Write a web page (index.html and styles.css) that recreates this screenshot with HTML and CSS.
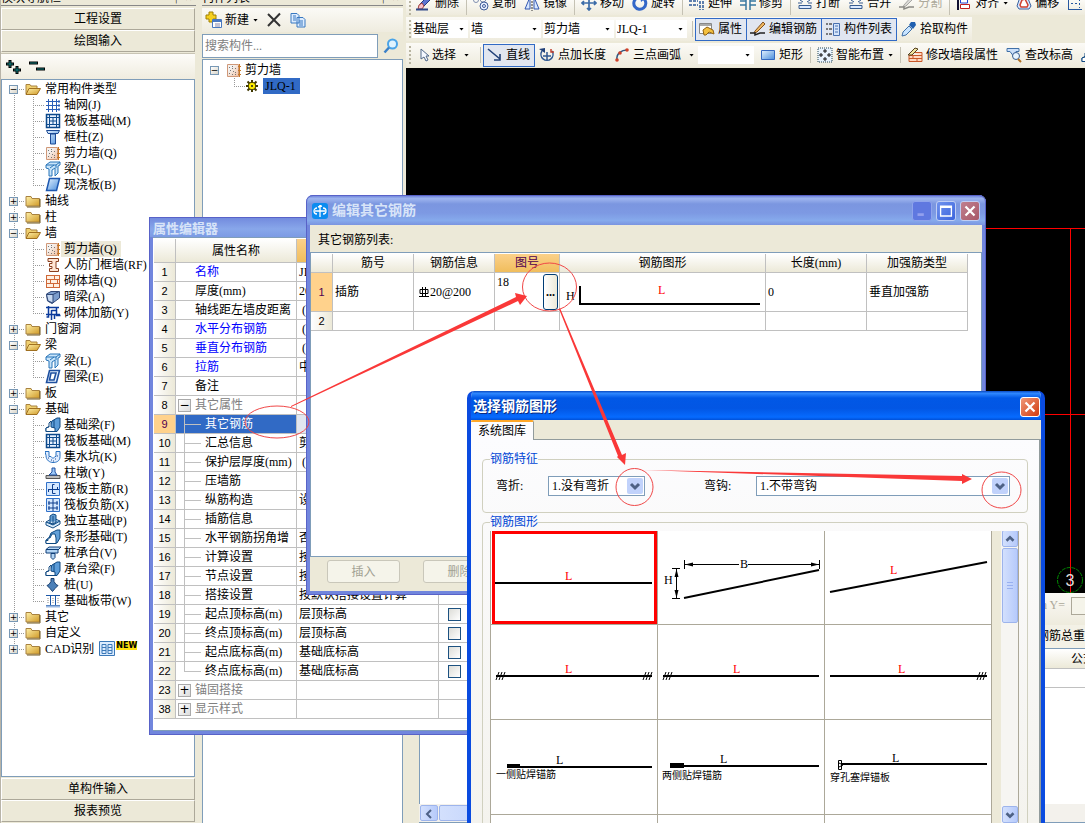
FILE: index.html
```html
<!DOCTYPE html>
<html lang="zh-CN">
<head>
<meta charset="utf-8">
<title>钢筋绘图输入</title>
<link rel="stylesheet" href="styles.css">
</head>
<body>
<svg class="defs" aria-hidden="true">
  <defs>
    <linearGradient id="gold" x1="0" y1="0" x2="1" y2="1"><stop offset="0" stop-color="#fff0a8"/><stop offset="1" stop-color="#d09a28"/></linearGradient>
    <linearGradient id="blue" x1="0" y1="0" x2="1" y2="1"><stop offset="0" stop-color="#e4f2ff"/><stop offset="1" stop-color="#4a8edc"/></linearGradient>
    <linearGradient id="peach" x1="0" y1="0" x2="1" y2="1"><stop offset="0.300" stop-color="#f4f2f0"/><stop offset="1" stop-color="#f4c0a0"/></linearGradient>
  </defs>
  <symbol id="folder" viewBox="0 0 16 16"><path d="M1 13V3.500h5l1 2h7.500V13z" fill="url(#gold)" stroke="#a88240"/><path d="M2 14h13V6" fill="none" stroke="#705820"/></symbol>
  <symbol id="open" viewBox="0 0 16 16"><path d="M1 13V3.500h4l1 1.500h6v3" fill="#f0d070" stroke="#a88240"/><path d="M1 13.500 4 7.500h11.500L12 13.500z" fill="url(#gold)" stroke="#a07020"/></symbol>
  <symbol id="axis" viewBox="0 0 16 16"><path d="M1 4.500h12M1 8.500h12M1 12.500h12M3.500 2v13M7.500 2v13M11.500 2v13" stroke="#2b5fb8" fill="none"/><path d="M13 4.500h2M13 8.500h2M13 12.500h2" stroke="#2b5fb8" stroke-width="2"/></symbol>
  <symbol id="raft" viewBox="0 0 16 16"><path d="M1.500 1.500h13v13h-13z" fill="#e8f2ff" stroke="#0d4a8c" stroke-width="1.500"/><path d="M4.500 4.500h7v7h-7zM8 4.500v7M4.500 8h7M4.500 1.500v3h-3M11.500 1.500v3h3M4.500 14.500v-3h-3M11.500 14.500v-3h3" fill="none" stroke="#0d4a8c"/></symbol>
  <symbol id="column" viewBox="0 0 16 16"><path d="M1.500 1.500h13l-1.500 3h-10zM5.500 5h5v10h-5z" fill="url(#blue)" stroke="#1c4a94"/></symbol>
  <symbol id="wall" viewBox="0 0 16 16"><path d="M1.500 2.500h11v12h-11z" fill="url(#peach)" stroke="#d09878"/><path d="M3 5h1v1H3zM6 4h1v1H6zM4 8h1v1H4zM7 9h1v1H7zM3 11h1v1H3zM6 12h1v1H6zM9 10h1v1H9zM6 6h1v1H6zM9 12h1v1H9zM9 6h1v1H9z" fill="#777"/><path d="M13.500 2v13M12 4.500h3M12 8.500h3M12 12.500h3" stroke="#c87828"/></symbol>
  <symbol id="beam" viewBox="0 0 16 16"><path d="M1 4 5 1h10v3l-2 1v7l-3 3V7L7 9v6H4V8L1 7z" fill="#c8e4fa" stroke="#2874b8"/><path d="M1 4h10l4-3M5 7l4-3M11 4v3" fill="none" stroke="#2874b8"/></symbol>
  <symbol id="slab" viewBox="0 0 16 16"><path d="M4.500 1.500h10l-3 12h-10z" fill="url(#blue)" stroke="#1e58b0" stroke-width="1.500"/></symbol>
  <symbol id="ring" viewBox="0 0 16 16"><path d="M4.500 1.500h10l-3 12h-10zM6 4l-1.500 7H9l2-7z" fill="#e4f0ff" stroke="#1e50a0" stroke-width="1.600"/></symbol>
  <symbol id="doorwall" viewBox="0 0 16 16"><path d="M3 1.500h10.500v3H11v7h2.500v3H4.500v-3H7v-2H4.500v-3H7v-2H3z" fill="#ffe6d4" stroke="#8a4020"/></symbol>
  <symbol id="brick" viewBox="0 0 16 16"><path d="M1 2.500h14v12H1z" fill="#fff0e2"/><path d="M1 2.500h14M1 6.500h14M1 10.500h14M1 14.500h14M1.500 2v12M9.500 2v4M5.500 6v4M12.500 6v4M8.500 10v4M14.500 2v12" stroke="#d06838" fill="none"/></symbol>
  <symbol id="dark" viewBox="0 0 16 16"><path d="M1.500 5 6 2.500h8.500V9L7 14.500 2.500 12z" fill="#7b9ccc" stroke="#304878"/><path d="M1.500 5.500H8V14l-5-2z" fill="#c6d8f0" stroke="#304878"/><path d="m8 5.500 6-3" stroke="#304878"/></symbol>
  <symbol id="tie" viewBox="0 0 16 16"><path d="M1 2.500h13M1 9.500h14M3.500 1v11h-2M6.500 5v10M6.500 5.500h5v5h4M11.500 2v9M9.500 10v4" stroke="#0a3a9c" stroke-width="1.500" fill="none"/></symbol>
  <symbol id="fbeam" viewBox="0 0 16 16"><path d="M1 14.500V11l4-2 2-5 5-3h3v9l-3 4.500z" fill="#5c9cd8" stroke="#104880"/><path d="M1 14.500V11l3-1V6l2-2v6l4 1v3.500zM9 3v8" fill="#fff" stroke="#104880"/></symbol>
  <symbol id="pit" viewBox="0 0 16 16"><path d="M0 2.500h4v5h2l2 2 2-2h1v-5h4v5c0 5-4 6-7 6s-7-2-7-7z" fill="#e0edff" stroke="#2870c0"/><path d="M3 9h1M6 11h1M10 10h1M12 7h1M8 12h1" stroke="#204890"/></symbol>
  <symbol id="pier" viewBox="0 0 16 16"><path d="M1 10.500h14v3H1z" fill="#bcbcbc" stroke="#555"/><path d="m4 10 3-3V3h3v4l2 3z" fill="#9cc8f8" stroke="#2050a0"/></symbol>
  <symbol id="main" viewBox="0 0 16 16"><path d="M1.500 1.500h13v13h-13z" fill="#d5e8ff" stroke="#3070c8"/><path d="M3 8.500h11M9.500 3.500h-2v9h3M12.500 6v3M3.500 8v3" stroke="#0d3c8c" fill="none"/></symbol>
  <symbol id="neg" viewBox="0 0 16 16"><path d="M1.500 1.500h13v13h-13z" fill="#d5e8ff" stroke="#3070c8"/><path d="M8 2v12M3 6h10M3 11h10M4 4v4M12 4v4M4 9v4M12 9v4" stroke="#0d3c8c" fill="none"/></symbol>
  <symbol id="isol" viewBox="0 0 16 16"><path d="m1 9 7-4 7 3v3l-7 4-7-3z" fill="#d9ebfa" stroke="#124c84"/><path d="M5 10V3l3-2 3 1v7l-3 2zM8 3v8M1 9l7 3 7-4" fill="#649dd2" stroke="#124c84"/></symbol>
  <symbol id="strip" viewBox="0 0 16 16"><path d="M8 3 12 1h3v8l-3 5H1v-3l3-2 2-5z" fill="#63a0d8" stroke="#0e4880"/><path d="M1 14.500v-3h2V9h2l2-4h3l1 4v5.500z" fill="#fff" stroke="#0e4880"/></symbol>
  <symbol id="cap" viewBox="0 0 16 16"><path d="M1 4.500 4 2h12l-3 3v3H1zM6 8.500h4v4l-2 2-2-2zM1 4.500h12" fill="#b4d5f4" stroke="#103f78"/></symbol>
  <symbol id="pile" viewBox="0 0 16 16"><path d="M6 1.500h3v3l2 3 2 1-3 3-2.500 3L5 11.500l-3-3 2-1 2-3z" fill="#4b80b8" stroke="#183f70"/></symbol>
  <symbol id="band" viewBox="0 0 16 16"><path d="M1 2.500h14M1 12.500h14M5.500 3v9M10.500 3v9" stroke="#1c58a8" fill="none"/><path d="M1 13.500h14" stroke="#9bb8e0" stroke-width="2"/><path d="M3 5v6M13 5v6M8 5v6" stroke="#888" stroke-dasharray="1 1"/></symbol>
  <symbol id="cadi" viewBox="0 0 16 16"><path d="M.500.500h15v14H.500zM3 3.500h4v9H3zM9 3.500h4v9H9zM3 6.500h4M3 9.500h4M9 6.500h4M9 9.500h4" fill="#dbecff" stroke="#3b78b8"/></symbol>
  <symbol id="newi" viewBox="0 0 18 18"><path d="M4 1h4v3h3v4H8v3H4V8H1V4h3z" fill="#f5d020" stroke="#a08000"/><path d="M7.500 8.500h9v8h-9z" fill="#fff" stroke="#4878c0"/><path d="M8 10h8" stroke="#4878c0" stroke-width="2"/><path d="M10 13h5M10 15h5" stroke="#88a"/></symbol>
  <symbol id="cross" viewBox="0 0 16 16"><path d="m2 2 12 12M14 1.500 2 14" stroke="#333" stroke-width="2" fill="none"/></symbol>
  <symbol id="copyi" viewBox="0 0 16 16"><path d="M1 1.500h6l2 2V11H1zM7 5.500h6l2 2V15H7z" fill="#dcecff" stroke="#3878c0"/><path d="M3 4h3M3 6h3M3 8h3M9 9h4M9 11h4M9 13h4" stroke="#3878c0"/></symbol>
  <symbol id="find" viewBox="0 0 16 16"><circle cx="9.500" cy="6" r="4.500" fill="#e0f4ff" stroke="#4aa4e8" stroke-width="2"/><path d="m6 9.500-4.500 5" stroke="#3a80c8" stroke-width="2.500"/></symbol>
  <symbol id="gear" viewBox="0 0 12 12"><path d="M6 0v12M0 6h12M1.500 1.500l9 9M10.500 1.500l-9 9" stroke="#403800" stroke-width="2"/><circle cx="6" cy="6" r="3.800" fill="#ffee00" stroke="#403800"/><circle cx="6" cy="6" r="1" fill="#222"/></symbol>
  <symbol id="erase" viewBox="0 0 16 16"><path d="m4 9 8-8 3 3-7 7z" fill="#5c74d0" stroke="#203880"/><path d="m3 10 3-2 2 3-2 3H2z" fill="#f8c0c8" stroke="#a04040"/><path d="M0 14.500h12" stroke="#304888" stroke-width="2"/></symbol>
  <symbol id="cpy" viewBox="0 0 16 16"><circle cx="3" cy="5" r="2.500" fill="none" stroke="#8090b0"/><circle cx="10" cy="4" r="3" fill="none" stroke="#8090b0"/><circle cx="11" cy="11" r="4" fill="#e8f0ff" stroke="#405c98"/><circle cx="11" cy="11" r="1.500" fill="none" stroke="#405c98"/></symbol>
  <symbol id="mirror" viewBox="0 0 16 16"><path d="M6 2v12H1zM10 2v12h5z" fill="#d8e8ff" stroke="#3458b0"/><path d="M8 0v16" stroke="#333" stroke-dasharray="2 1"/></symbol>
  <symbol id="move" viewBox="0 0 16 16"><path d="M8 1v14M1 8h14M6 3l2-2 2 2M6 13l2 2 2-2M3 6 1 8l2 2M13 6l2 2-2 2" stroke="#3c6ca8" stroke-width="1.700" fill="none"/></symbol>
  <symbol id="rot" viewBox="0 0 16 16"><path d="M5 3a6 6 0 1 0 7 1" stroke="#3468c8" stroke-width="3" fill="none"/><path d="m8 0 6 3-5 4z" fill="#3468c8"/></symbol>
  <symbol id="extend" viewBox="0 0 16 16"><path d="M0 6h9M0 10h9M11 2v13M14 2v13" stroke="#2c5898" stroke-width="1.500" stroke-dasharray="3 1"/></symbol>
  <symbol id="trim" viewBox="0 0 16 16"><path d="M0 6h6M10 6h6M0 10h6M10 10h6M6 1v14M10 1v14" stroke="#3878a0" stroke-width="1.500"/></symbol>
  <symbol id="brk" viewBox="0 0 16 16"><path d="M2 10.500h12v3H2z" fill="#dceaff" stroke="#385c90"/><path d="M1 8h4M11 8h4M3 5l3 2M13 5l-3 2" stroke="#385c90"/></symbol>
  <symbol id="align" viewBox="0 0 16 16"><path d="M2 0v15" stroke="#113" stroke-width="2"/><path d="M4.500 3h7v5h-7z" fill="#fff" stroke="#2040d0"/><path d="M4.500 9.500h9v4h-9z" fill="#fff" stroke="#c02020"/></symbol>
  <symbol id="offset" viewBox="0 0 16 16"><path d="m4 2 7-1 4 10-2 3H3l-2-3z" fill="#d8e8ff" stroke="#3860a0"/><path d="m6 5 3-1 3 6-1 2H5l-1-2z" fill="#fff" stroke="#d04030" stroke-width="1.500"/></symbol>
  <symbol id="marquee" viewBox="0 0 16 16"><path d="M1.500 1v13M1 14.500h14" stroke="#2858a0" fill="none"/><path d="M4 4.500h9M4 8.500h9M12.500 4v9" stroke="#2858a0" stroke-dasharray="2 2" fill="none"/></symbol>
  <symbol id="attr" viewBox="0 0 16 16"><path d="M.500 2.500h12v10h-12z" fill="#fff" stroke="#888"/><path d="M1 3h11v2H1z" fill="#aaa"/><path d="m4 9 4-3 6 3 1 4-5-2-3 3H5z" fill="#f4c040" stroke="#906010"/></symbol>
  <symbol id="pencil" viewBox="0 0 16 16"><path d="m5 10 8-9 2 2-8 8-3 1z" fill="#f0b860" stroke="#805020"/><path d="M0 12h5v2l5-2h5" stroke="#222" stroke-width="1.500" fill="none"/></symbol>
  <symbol id="listi" viewBox="0 0 16 16"><path d="M1 3h2M1 8h2M1 13h2M4 3h3M4 8h3M4 13h3" stroke="#555" stroke-width="1.500"/><path d="M8.500 2.500h6v12h-6z" fill="#d4e4fa" stroke="#4870b0"/><path d="M10 5h3M10 8h3M10 11h3" stroke="#4870b0"/></symbol>
  <symbol id="drop" viewBox="0 0 16 16"><path d="m1 15 1-4 6-6 3 3-6 6z" fill="#c8e4ff" stroke="#4070a8"/><path d="m8 4 2-3h4l1 3-3 4z" fill="#2060b0"/></symbol>
  <symbol id="arrow" viewBox="0 0 12 16"><path d="M2 2v10l3-2 2 4 2-1-2-4h3z" fill="#f4f8ff" stroke="#506888"/></symbol>
  <symbol id="linei" viewBox="0 0 16 16"><path d="m1 2 12 10M13 7v6H7" stroke="#204078" stroke-width="1.600" fill="none"/></symbol>
  <symbol id="plen" viewBox="0 0 16 16"><path d="M3 4a6 6 0 1 0 10 0M8 5v8M4 9h8" stroke="#305890" stroke-width="1.500" fill="none"/><path d="m0 2 6-1v5z" fill="#204078"/><path d="M12 2v3h3" stroke="#c04030" fill="none" stroke-width="1.500"/></symbol>
  <symbol id="arc" viewBox="0 0 16 16"><path d="M3 13C2 6 8 3 13 3" fill="none" stroke="#305880" stroke-width="1.500"/><circle cx="3" cy="13" r="1.800" fill="#d04028"/><circle cx="6" cy="6" r="1.800" fill="#d04028"/><circle cx="13" cy="3" r="1.800" fill="#d04028"/></symbol>
  <symbol id="rect" viewBox="0 0 16 16"><path d="M1.500 3.500h13v9h-13z" fill="url(#blue)" stroke="#3468c0"/></symbol>
  <symbol id="smart" viewBox="0 0 16 16"><path d="M1 1h14v14H1z" fill="#e9f4ff" stroke="#245" stroke-dasharray="1 1"/><path d="M8 2v4M6 4h4M8 10v4M6 12h4M2 8h4M4 6v4M10 8h4M12 6v4" stroke="#111"/></symbol>
  <symbol id="brickedit" viewBox="0 0 16 16"><path d="M2 8.500h13v6H2zM6 5.500h9v3M2 11.500h13M6 8v3M10 11v3" fill="#ffd8c0" stroke="#c85828"/><path d="m1 8 7-7 3 1-6 6z" fill="#eee4a0" stroke="#554020"/></symbol>
  <symbol id="findh" viewBox="0 0 16 16"><path d="M1 1.500h12v3h-3l-3 4-3-4H1z" fill="#cce0fa" stroke="#4070a8"/><circle cx="10" cy="9" r="3.500" fill="#e8f4ff" stroke="#385c90"/><path d="m12 12 3 3" stroke="#b07020" stroke-width="2"/></symbol>
  <symbol id="down" viewBox="0 0 16 16"><path d="m4 6 4 4 4-4" fill="none" stroke="#4d6185" stroke-width="3"/></symbol>
</svg>

<div class="workspace">
  <nav class="nav">
    <div class="caption"><span>模块导航栏</span><span class="capctl">┿ ×</span></div>
    <button class="navbtn">工程设置</button>
    <button class="navbtn">绘图输入</button>
    <div class="treebar"><svg viewBox="0 0 44 20" width="44" height="20"><path d="M5 3v8M1 7h8M12 9v8M8 13h8M24 6h9M31 12h9" stroke="#000" stroke-width="3"/><path d="M5 4v6M2 7h6M12 10v6M9 13h6M25 6h7M32 12h7" stroke="#108080"/></svg></div>
    <ul class="tree">
      <li><div class="row"><button class="tw">−</button><svg><use href="#open"/></svg>常用构件类型</div>
        <ul>
          <li><svg><use href="#axis"/></svg><span>轴网(J)</span></li>
          <li><svg><use href="#raft"/></svg><span>筏板基础(M)</span></li>
          <li><svg><use href="#column"/></svg><span>框柱(Z)</span></li>
          <li><svg><use href="#wall"/></svg><span>剪力墙(Q)</span></li>
          <li><svg><use href="#beam"/></svg><span>梁(L)</span></li>
          <li><svg><use href="#slab"/></svg><span>现浇板(B)</span></li>
        </ul></li>
      <li><div class="row"><button class="tw">+</button><svg><use href="#folder"/></svg>轴线</div></li>
      <li><div class="row"><button class="tw">+</button><svg><use href="#folder"/></svg>柱</div></li>
      <li><div class="row"><button class="tw">−</button><svg><use href="#open"/></svg>墙</div>
        <ul>
          <li><svg><use href="#wall"/></svg><span class="on">剪力墙(Q)</span></li>
          <li><svg><use href="#doorwall"/></svg><span>人防门框墙(RF)</span></li>
          <li><svg><use href="#brick"/></svg><span>砌体墙(Q)</span></li>
          <li><svg><use href="#dark"/></svg><span>暗梁(A)</span></li>
          <li><svg><use href="#tie"/></svg><span>砌体加筋(Y)</span></li>
        </ul></li>
      <li><div class="row"><button class="tw">+</button><svg><use href="#folder"/></svg>门窗洞</div></li>
      <li><div class="row"><button class="tw">−</button><svg><use href="#open"/></svg>梁</div>
        <ul>
          <li><svg><use href="#beam"/></svg><span>梁(L)</span></li>
          <li><svg><use href="#ring"/></svg><span>圈梁(E)</span></li>
        </ul></li>
      <li><div class="row"><button class="tw">+</button><svg><use href="#folder"/></svg>板</div></li>
      <li><div class="row"><button class="tw">−</button><svg><use href="#open"/></svg>基础</div>
        <ul>
          <li><svg><use href="#fbeam"/></svg><span>基础梁(F)</span></li>
          <li><svg><use href="#raft"/></svg><span>筏板基础(M)</span></li>
          <li><svg><use href="#pit"/></svg><span>集水坑(K)</span></li>
          <li><svg><use href="#pier"/></svg><span>柱墩(Y)</span></li>
          <li><svg><use href="#main"/></svg><span>筏板主筋(R)</span></li>
          <li><svg><use href="#neg"/></svg><span>筏板负筋(X)</span></li>
          <li><svg><use href="#isol"/></svg><span>独立基础(P)</span></li>
          <li><svg><use href="#strip"/></svg><span>条形基础(T)</span></li>
          <li><svg><use href="#cap"/></svg><span>桩承台(V)</span></li>
          <li><svg><use href="#fbeam"/></svg><span>承台梁(F)</span></li>
          <li><svg><use href="#pile"/></svg><span>桩(U)</span></li>
          <li><svg><use href="#band"/></svg><span>基础板带(W)</span></li>
        </ul></li>
      <li><div class="row"><button class="tw">+</button><svg><use href="#folder"/></svg>其它</div></li>
      <li><div class="row"><button class="tw">+</button><svg><use href="#folder"/></svg>自定义</div></li>
      <li><div class="row"><button class="tw">+</button><svg><use href="#folder"/></svg>CAD识别<svg class="cadicon"><use href="#cadi"/></svg><b class="new">NEW</b></div></li>
    </ul>
    <button class="navbtn">单构件输入</button>
    <button class="navbtn">报表预览</button>
  </nav>

  <section class="parts">
    <div class="caption"><span>构件列表</span><span class="capctl">┿ ×</span></div>
    <div class="partsbar">
      <button class="flat"><svg class="i18"><use href="#newi"/></svg>新建<i class="caret"></i></button>
      <button class="flat" aria-label="删除"><svg><use href="#cross"/></svg></button>
      <button class="flat" aria-label="复制"><svg><use href="#copyi"/></svg></button>
    </div>
    <div class="search"><input type="text" placeholder="搜索构件..." aria-label="搜索构件"><button class="flat" aria-label="搜索"><svg><use href="#find"/></svg></button></div>
    <ul class="partlist">
      <li><button class="tw">−</button><svg><use href="#wall"/></svg>剪力墙</li>
      <li class="leaf"><svg><use href="#gear"/></svg><span class="picked">JLQ-1</span></li>
    </ul>
  </section>

  <main class="main">
    <div class="bar bar1"><i class="grip"></i>
      <button class="tool"><svg><use href="#erase"/></svg>删除</button><i class="sep"></i>
      <button class="tool"><svg><use href="#cpy"/></svg>复制</button>
      <button class="tool"><svg><use href="#mirror"/></svg>镜像</button><i class="sep"></i>
      <button class="tool"><svg><use href="#move"/></svg>移动</button>
      <button class="tool"><svg><use href="#rot"/></svg>旋转</button><i class="sep"></i>
      <button class="tool"><svg><use href="#extend"/></svg>延伸</button>
      <button class="tool"><svg><use href="#trim"/></svg>修剪</button><i class="sep"></i>
      <button class="tool"><svg><use href="#brk"/></svg>打断</button>
      <button class="tool"><svg><use href="#brk"/></svg>合并</button>
      <button class="tool" disabled><svg><use href="#pencil"/></svg>分割</button><i class="sep"></i>
      <button class="tool"><svg><use href="#align"/></svg>对齐<i class="caret"></i></button>
      <button class="tool"><svg><use href="#offset"/></svg>偏移</button>
      <button class="tool" aria-label="选框"><svg><use href="#marquee"/></svg></button>
    </div>
    <div class="bar bar2"><i class="grip"></i>
      <span class="combo short"><select aria-label="楼层"><option>基础层</option></select><i class="caret"></i></span>
      <span class="combo"><select aria-label="类别"><option>墙</option></select><i class="caret"></i></span>
      <span class="combo"><select aria-label="构件类型"><option>剪力墙</option></select><i class="caret"></i></span>
      <span class="combo"><select aria-label="构件"><option>JLQ-1</option></select><i class="caret"></i></span><i class="sep"></i>
      <div class="group"><button class="tool down"><svg><use href="#attr"/></svg>属性</button><button class="tool down"><svg><use href="#pencil"/></svg>编辑钢筋</button><button class="tool down"><svg><use href="#listi"/></svg>构件列表</button></div>
      <button class="tool"><svg><use href="#drop"/></svg>拾取构件</button>
    </div>
    <div class="bar bar3"><i class="grip"></i>
      <button class="tool pick"><svg class="i12"><use href="#arrow"/></svg>选择<i class="caret wide"></i></button><i class="sep"></i>
      <button class="tool down"><svg><use href="#linei"/></svg>直线</button>
      <button class="tool"><svg><use href="#plen"/></svg>点加长度</button>
      <button class="tool"><svg><use href="#arc"/></svg>三点画弧<i class="caret wide"></i></button>
      <span class="combo short"><select aria-label="弧参数"><option></option></select><i class="caret"></i></span>
      <button class="tool"><svg><use href="#rect"/></svg>矩形</button><i class="sep"></i>
      <button class="tool"><svg><use href="#smart"/></svg>智能布置<i class="caret"></i></button><i class="sep"></i>
      <button class="tool"><svg><use href="#brickedit"/></svg>修改墙段属性</button>
      <button class="tool"><svg><use href="#findh"/></svg>查改标高</button>
      <button class="tool" aria-label="墙"><svg><use href="#fbeam"/></svg></button>
    </div>
    <div class="canvas">
      <svg viewBox="0 0 120 525" width="120" height="525"><path d="M0 160.500h120M0 346.500h120M105.500 160v365" stroke="#f00" fill="none"/><circle cx="105" cy="512" r="12.500" fill="none" stroke="#008a00" stroke-dasharray="4 1"/><text x="105" y="518" text-anchor="middle" class="axisno">3</text></svg>
    </div>
    <div class="bottom">
      <div class="status"><label>mm Y= <input type="text" aria-label="Y"></label></div>
      <div class="weight">钢筋总重</div>
      <div class="whead">公式</div>
      <div class="wrow"></div>
      <div class="wbody"></div>
      <div class="hscroll"><button aria-label="向左"><svg viewBox="0 0 16 16"><path d="M10 4 6 8l4 4" fill="none" stroke="#4d6185" stroke-width="2"/></svg></button><i></i></div>
    </div>
  </main>
</div>

<section class="win props" aria-label="属性编辑器">
  <h2>属性编辑器</h2>
  <div class="pane">
  <table class="grid">
    <colgroup><col class="c22"><col class="c121"><col class="c142"><col></colgroup>
    <tr class="head"><th></th><th>属性名称</th><th class="hot"></th><th></th></tr>
    <tr><th>1</th><td class="name key">名称</td><td>JLQ</td><td></td></tr>
    <tr><th>2</th><td class="name">厚度(mm)</td><td>200</td><td></td></tr>
    <tr><th>3</th><td class="name">轴线距左墙皮距离</td><td class="in">(</td><td></td></tr>
    <tr><th>4</th><td class="name key">水平分布钢筋</td><td class="in">(2</td><td></td></tr>
    <tr><th>5</th><td class="name key">垂直分布钢筋</td><td class="in">(2</td><td></td></tr>
    <tr><th>6</th><td class="name key">拉筋</td><td>中</td><td></td></tr>
    <tr><th>7</th><td class="name">备注</td><td></td><td></td></tr>
    <tr><th>8</th><td class="parent"><div><button class="box">−</button>其它属性</div></td><td></td><td></td></tr>
    <tr class="cur"><th>9</th><td class="sub">其它钢筋</td><td></td><td></td></tr>
    <tr><th>10</th><td class="sub">汇总信息</td><td>剪</td><td></td></tr>
    <tr><th>11</th><td class="sub">保护层厚度(mm)</td><td class="in">(</td><td></td></tr>
    <tr><th>12</th><td class="sub">压墙筋</td><td></td><td></td></tr>
    <tr><th>13</th><td class="sub">纵筋构造</td><td>设</td><td></td></tr>
    <tr><th>14</th><td class="sub">插筋信息</td><td></td><td></td></tr>
    <tr><th>15</th><td class="sub">水平钢筋拐角增</td><td>否</td><td></td></tr>
    <tr><th>16</th><td class="sub">计算设置</td><td>按</td><td></td></tr>
    <tr><th>17</th><td class="sub">节点设置</td><td>按</td><td></td></tr>
    <tr><th>18</th><td class="sub">搭接设置</td><td>按默认搭接设置计算</td><td></td></tr>
    <tr><th>19</th><td class="sub">起点顶标高(m)</td><td>层顶标高</td><td class="ck"><input type="checkbox" aria-label="起点顶标高"></td></tr>
    <tr><th>20</th><td class="sub">终点顶标高(m)</td><td>层顶标高</td><td class="ck"><input type="checkbox" aria-label="终点顶标高"></td></tr>
    <tr><th>21</th><td class="sub">起点底标高(m)</td><td>基础底标高</td><td class="ck"><input type="checkbox" aria-label="起点底标高"></td></tr>
    <tr><th>22</th><td class="sub end">终点底标高(m)</td><td>基础底标高</td><td class="ck"><input type="checkbox" aria-label="终点底标高"></td></tr>
    <tr><th>23</th><td class="parent"><div><button class="box">+</button>锚固搭接</div></td><td></td><td></td></tr>
    <tr><th>38</th><td class="parent"><div><button class="box">+</button>显示样式</div></td><td></td><td></td></tr>
  </table>
  </div>
</section>

<section class="win rebar" aria-label="编辑其它钢筋">
  <header>
    <svg width="16" height="16" viewBox="0 0 16 16"><rect width="16" height="16" rx="3" fill="#0c8cf0"/><path d="M8 2v12M3 8h10M6 4l4-1M5 5a3 3 0 0 0 0 6M11 5a3 3 0 0 1 0 6" stroke="#fff" stroke-width="1.300" fill="none"/></svg>
    <h2>编辑其它钢筋</h2>
    <button class="wb" disabled aria-label="最小化"><svg viewBox="0 0 20 20"><path d="M5 14h7" stroke="#93a0ee" stroke-width="3"/></svg></button>
    <button class="wb" aria-label="最大化"><svg viewBox="0 0 20 20"><path d="M4 4.500h12v11H4zM4 6h12" fill="none" stroke="#fff" stroke-width="1.500"/></svg></button>
    <button class="wb close" aria-label="关闭"><svg viewBox="0 0 20 20"><path d="m5 5 10 10M15 5 5 15" stroke="#fff" stroke-width="2.500"/></svg></button>
  </header>
  <p>其它钢筋列表:</p>
  <div class="pane">
    <table class="grid">
      <colgroup><col class="c22"><col class="c81"><col class="c81"><col class="c65"><col class="c206"><col class="c101"><col class="c101"></colgroup>
      <tr class="head"><th></th><th>筋号</th><th>钢筋信息</th><th class="hot">图号</th><th>钢筋图形</th><th>长度(mm)</th><th>加强筋类型</th></tr>
      <tr class="tall"><th class="curno">1</th><td>插筋</td><td><svg class="phi" viewBox="0 0 10 12"><path d="M3.500 1v10M6.500 1v10M1 3.500h8v4H1zM0 10.500h10" fill="none" stroke="#000"/></svg>20@200</td>
        <td><div class="picno">18<button class="dots">...</button></div></td>
        <td><svg class="shape" viewBox="0 0 205 38" width="205" height="38"><path d="M20 13v18h180" fill="none" stroke="#000" stroke-width="2"/><text x="6" y="27">H</text><text x="98" y="21" class="red">L</text></svg></td><td>0</td><td>垂直加强筋</td></tr>
      <tr><th>2</th><td></td><td></td><td></td><td></td><td></td><td></td></tr>
    </table>
  </div>
  <footer><button disabled>插入</button><button disabled>删除</button></footer>
</section>

<section class="dialog" aria-label="选择钢筋图形">
  <header><h2>选择钢筋图形</h2><button class="wb close" aria-label="关闭"><svg viewBox="0 0 20 20"><path d="m5 5 10 10M15 5 5 15" stroke="#fff" stroke-width="2.500"/></svg></button></header>
  <div class="tabs"><button class="tab">系统图库</button></div>
  <div class="page">
    <fieldset class="feat"><legend>钢筋特征</legend>
      <div class="fields">
      <label for="bend">弯折:</label><span class="xpsel bend"><select id="bend"><option>1.没有弯折</option></select><svg><use href="#down"/></svg></span>
      <label for="hook">弯钩:</label><span class="xpsel hook"><select id="hook"><option>1.不带弯钩</option></select><svg><use href="#down"/></svg></span>
      </div>
    </fieldset>
    <fieldset class="shapes"><legend>钢筋图形</legend>
      <div class="gallery">
        <div class="cells">
          <button class="sel"><svg viewBox="0 0 166 94"><path d="M4 53h157" class="bar-l"/><text x="74" y="50" class="red">L</text></svg></button>
          <button><svg viewBox="0 0 166 94"><path d="m26 68 135-28" class="bar-l"/><path d="M26.500 30v9M161.500 30v9M27 34.500h54M90 34.500h71M14 38.500h8M14 68.500h8M18.500 39v29" stroke="#000" fill="none"/><path d="m27 34.500 8-2v4zM161 34.500l-8-2v4zM18.500 39l-2 8h4zM18.500 68l-2-8h4z"/><text x="82" y="38">B</text><text x="6" y="54">H</text></svg></button>
          <button><svg viewBox="0 0 166 94"><path d="m5 62 157-30" class="bar-l"/><text x="65" y="44" class="red">L</text></svg></button>
          <button><svg viewBox="0 0 166 94"><path d="M5 51h156" class="bar-l"/><path d="m5 55 3-8m0 8 3-8m0 8 3-8M152 55l3-8m0 8 3-8m0 8 3-8" stroke="#000"/><text x="74" y="48" class="red">L</text></svg></button>
          <button><svg viewBox="0 0 166 94"><path d="M5 51h156" class="bar-l"/><path d="m5 55 3-8m0 8 3-8m0 8 3-8" stroke="#000"/><text x="75" y="48" class="red">L</text></svg></button>
          <button><svg viewBox="0 0 166 94"><path d="M5 51h157" class="bar-l"/><path d="m152 55 3-8m0 8 3-8m0 8 3-8" stroke="#000"/><text x="73" y="48" class="red">L</text></svg></button>
          <button><svg viewBox="0 0 166 94"><path d="M16 47h145" class="bar-l"/><path d="M16 44h13v3H16z"/><text x="65" y="44">L</text><text x="5" y="58" class="note">一侧贴焊锚筋</text></svg></button>
          <button><svg viewBox="0 0 166 94"><path d="M12 46h149" class="bar-l"/><path d="M12 43h14v5H12z"/><text x="62" y="43">L</text><text x="4" y="59" class="note">两侧贴焊锚筋</text></svg></button>
          <button><svg viewBox="0 0 166 94"><path d="M16 44h146" class="bar-l"/><path d="M13.500 40.500h3v9h-3zM14 43l4 2-4 2" stroke="#000" fill="none"/><text x="67" y="42">L</text><text x="5" y="61" class="note">穿孔塞焊锚板</text></svg></button>
          <button></button><button></button><button></button>
        </div>
        <div class="vscroll"><button class="up" aria-label="向上"><svg viewBox="0 0 16 16"><path d="m4 10 4-4 4 4" fill="none" stroke="#4d6185" stroke-width="3"/></svg></button><i></i><button aria-label="向下"><svg viewBox="0 0 16 16"><path d="m4 6 4 4 4-4" fill="none" stroke="#4d6185" stroke-width="3"/></svg></button></div>
      </div>
    </fieldset>
  </div>
</section>

<svg class="marks" viewBox="0 0 1085 823" width="1085" height="823" aria-hidden="true">
  <g fill="none" stroke="#f04848"><ellipse cx="277" cy="422" rx="32" ry="16"/><ellipse cx="549.500" cy="287" rx="27" ry="24"/><circle cx="634.500" cy="487" r="18.500"/><ellipse cx="1001.500" cy="490" rx="19.500" ry="18"/></g>
  <g fill="#fa3838"><path d="m291 406 225-109-1-4 12 3-7 9-2-4-227 106z"/><path d="m559 309 1-1 62 147 4-2-1 12-8-8 1-1z"/><path d="m643 470 319 6v-2l10 5-10 5v-3z"/></g>
</svg>
</body>
</html>
```
FILE: styles.css
```css
* { box-sizing: border-box; }
html, body { height: 100%; }
body { margin: 0; overflow: hidden; position: relative; background: #ece9d8; color: #000; font: 12px/16px "Liberation Serif", "Noto Sans CJK SC", sans-serif; }
button, input, select { font: inherit; color: inherit; margin: 0; padding: 0; border-radius: 0; }
button { background: none; border: 0; white-space: nowrap; }
ul { list-style: none; margin: 0; padding: 0; }
h2, p { margin: 0; }
svg { width: 16px; height: 16px; flex: none; display: block; }
.defs { position: absolute; width: 0; height: 0; }
i { flex: none; }

.workspace { display: grid; grid-template-columns: 196px 206px 1fr; column-gap: 1px; height: 100%; }
.nav, .parts, .main { min-width: 0; min-height: 0; display: flex; flex-direction: column; }
.nav { border-left: 1px solid #b8b4a8; padding-bottom: 1px; }
.caption { height: 6px; line-height: 14px; display: flex; align-items: flex-end; justify-content: space-between; overflow: hidden; border-bottom: 1px solid #888; margin-bottom: 2px; flex: none; }
.capctl { padding-right: 4px; }
.navbtn { height: 22px; flex: none; background: #ece9d8; border: 1px solid #aca899; border-top-color: #fff; border-left-color: #fff; margin-right: 1px; }
.treebar { height: 26px; flex: none; background: linear-gradient(#fdfcf9, #efecdf); padding: 3px 4px; border-top: 1px solid #c8c4b4; margin: 1px 1px 0 0; }
.treebar svg { width: 44px; height: 20px; }
.tree { flex: 1; min-height: 0; overflow: hidden; background: #fff; border: 1px solid #7f9db9; margin-right: 1px; padding-top: 1px; margin-bottom: 1px; }
.tree .row { height: 16px; display: flex; align-items: center; padding-left: 7px; background: repeating-linear-gradient(90deg, #999 0 1px, transparent 1px 2px) 17px 8px / 6px 1px no-repeat; white-space: nowrap; }
.tree .row svg { margin: 0 4px 0 7px; }
.tree > li { background: repeating-linear-gradient(#999 0 1px, transparent 1px 2px) 12px 0 / 1px 100% no-repeat; }
.tree > li:first-child { background-position: 12px 8px; }
.tree > li:last-child { background-size: 1px 8px; }
.tree li li { height: 16px; display: flex; align-items: center; padding-left: 43px; white-space: nowrap; background: repeating-linear-gradient(#999 0 1px, transparent 1px 2px) 31px 0 / 1px 100% no-repeat, repeating-linear-gradient(90deg, #999 0 1px, transparent 1px 2px) 31px 8px / 11px 1px no-repeat; }
.tree li li:last-child { background-size: 1px 8px, 11px 1px; }
.tree li li span { padding: 0 4px 0 3px; }
.tree li li .on { background: #ece9d8; }
.tree .row .cadicon { margin: 0 1px 0 5px; }
.new { font: bold 8px/9px "DejaVu Sans", sans-serif; background: #ffe010; align-self: flex-start; }
.tw { width: 9px; height: 9px; flex: none; border: 1px solid #7898b5; background: linear-gradient(135deg, #fff, #d8d4c8); font: 9px/6px "DejaVu Sans", sans-serif; display: flex; align-items: center; justify-content: center; }

.parts { padding-left: 5px; }
.partsbar { height: 24px; flex: none; display: flex; align-items: center; gap: 8px; padding-left: 3px; background: linear-gradient(#fbfaf6, #efecdf); margin-bottom: 2px; }
.flat { display: flex; align-items: center; gap: 2px; }
.i18 { width: 18px; height: 18px; }
.caret { width: 5px; height: 3px; background: #000; clip-path: polygon(0 0, 100% 0, 50% 100%); margin-left: 2px; }
.caret.wide { margin-left: 6px; }
.search { display: flex; height: 24px; flex: none; margin-bottom: 1px; }
.search input { flex: 1; min-width: 0; border: 1px solid #7f9db9; background: #fff; padding: 0 2px; }
.search input::placeholder { color: #808080; opacity: 1; }
.search button { width: 25px; justify-content: center; }
.partlist { flex: 1; border: 1px solid #7f9db9; border-bottom: 0; background: #fff; padding: 2px 0 0 7px; }
.partlist li { height: 16px; display: flex; align-items: center; }
.partlist li svg { margin: 0 3px 0 7px; }
.partlist .leaf { padding-left: 23px; background: repeating-linear-gradient(#999 0 1px, transparent 1px 2px) 24px 0 / 1px 8px no-repeat, repeating-linear-gradient(90deg, #999 0 1px, transparent 1px 2px) 24px 8px / 12px 1px no-repeat; }
.partlist .leaf svg { width: 12px; height: 12px; margin: 0 5px 0 13px; }
.picked { background: #316ac5; padding: 0 4px 0 2px; }

.main { padding-left: 2px; }
.bar { display: flex; align-items: center; height: 24px; flex: none; background: linear-gradient(#fbfaf6, #eeebdd); overflow: hidden; white-space: nowrap; padding-left: 3px; margin-bottom: 2px; }
.bar1 { height: 15px; align-items: flex-end; }
.bar2 { align-self: flex-start; }
.grip { width: 2px; height: 18px; margin-right: 1px; background: repeating-linear-gradient(#b8b4a0 0 2px, transparent 2px 4px); }
.sep { width: 1px; height: 16px; background: #c5c2b4; margin: 0 2px 0 3px; }
.tool { height: 24px; display: flex; align-items: center; gap: 3px; padding: 0 4px; flex: none; }
.tool:disabled { color: #aca899; }
.tool:disabled svg { filter: grayscale(1); opacity: .5; }
.tool .caret { margin-left: 1px; }
.tool .caret.wide { margin-left: 5px; }
.i12 { width: 12px; }
.bar3 .pick { padding: 0 8px 0 7px; gap: 1px; }
.bar3 .pick .caret { margin-left: 7px; }
.down { height: 23px; border: 1px solid #316ac5; background: #e1e6f0; padding: 0 4px 0 3px; }
.group { display: flex; }
.group .down + .down { border-left: 0; }
.combo { display: flex; flex: none; align-items: center; width: 71px; height: 18px; background: #fff; margin-right: 2px; padding-right: 4px; }
.combo.short { width: 56px; }
.combo select { appearance: none; border: 0; background: none; flex: 1; min-width: 0; height: 18px; padding-left: 1px; }
.canvas { flex: 1; min-height: 0; background: #000; margin: -1px 0 0; display: flex; justify-content: flex-end; }
.canvas svg { width: 120px; height: 525px; }
.axisno { fill: #ddd; font: 16px "Liberation Sans", sans-serif; }
.bottom { height: 230px; flex: none; padding-left: 13px; display: flex; flex-direction: column; }
.status { height: 32px; display: flex; justify-content: flex-end; background: linear-gradient(#fbfaf6, #eeebdd); color: #aca899; padding-top: 4px; overflow: hidden; }
.status label { display: flex; gap: 3px; white-space: pre; }
.status input { width: 14px; height: 18px; border: 1px solid #aca899; border-right: 0; background: #f5f4ea; }
.weight { height: 24px; text-align: right; line-height: 22px; background: #f3f1e6; border-bottom: 1px solid #7f9db9; white-space: nowrap; }
.whead { height: 20px; text-align: right; line-height: 20px; background: linear-gradient(#fff, #ece9d8); border-bottom: 1px solid #c0c0c0; margin-right: -10px; }
.wrow { height: 19px; background: #fff; border-bottom: 1px solid #c0c0c0; }
.wbody { flex: 1; background: #fff; border-left: 1px solid #7f9db9; }
.hscroll { height: 19px; background: #f3f1ec; display: flex; padding: 1px; border-bottom: 1px solid #7f9db9; }
.hscroll button, .hscroll i, .vscroll button, .vscroll i { background: linear-gradient(90deg, #d3e0fd, #b6cafb); border: 1px solid #9db4ec; border-radius: 2px; }
.hscroll i { width: 90px; margin-left: 1px; }

.win { position: absolute; background: #ece9d8; border: 4px solid #7186dd; border-top: 0; display: flex; flex-direction: column; outline: 1px solid #5862c8; outline-offset: -1px; }
.win h2 { color: #d8e4f8; font-size: 14px; line-height: 20px; }
.pane { background: #fff; border: 1px solid #7f9db9; padding-top: 1px; flex: 1; }
.props { left: 149px; top: 217px; width: 340px; }
.props h2 { font-size: 13px; height: 20px; line-height: 23px; background: linear-gradient(#7189dd, #88a7ea 60%, #7c9be4); margin: 0 -4px; padding-left: 4px; }
.props .pane { border-left: 0; padding: 1px 0 11px 1px; }
.grid { border-collapse: separate; border-spacing: 0; table-layout: fixed; width: 100%; line-height: 18px; }
.grid td, .grid th { height: 19px; padding: 0 0 0 2px; border-right: 1px solid #c0c0c0; border-bottom: 1px solid #c0c0c0; white-space: nowrap; overflow: hidden; font-weight: normal; text-align: left; }
.grid th { background: linear-gradient(#fff, #ece9d8); text-align: center; padding: 0; }
.grid tr:not(.head) th { background: linear-gradient(90deg, #fff, #ece9d8); font-family: "Liberation Sans", sans-serif; font-size: 11px; }
.grid .head th { height: 24px; }
.grid .head .hot { background: linear-gradient(#fbd18a, #f0bd5c); color: #500050; }
.c22 { width: 22px; } .c121 { width: 121px; } .c142 { width: 142px; } .c81 { width: 81px; } .c65 { width: 65px; } .c206 { width: 206px; } .c101 { width: 101px; }
.grid .name { padding-left: 19px; }
.grid .key { color: #00f; }
.grid .in { padding-left: 5px; }
.grid .parent { color: #808080; padding-left: 2px; }
.parent div { display: flex; align-items: center; gap: 4px; }
.box { width: 13px; height: 13px; border: 1px solid #aaa; background: linear-gradient(135deg, #fff, #ddd); color: #000; font: 12px/11px "DejaVu Sans", sans-serif; }
.grid .sub { padding-left: 29px; background: linear-gradient(#c0c0c0, #c0c0c0) 8px 0 / 1px 100% no-repeat, linear-gradient(#c0c0c0, #c0c0c0) 8px 9px / 17px 1px no-repeat; }
.grid .end { background-size: 1px 9px, 17px 1px; }
.grid .cur .sub { background-color: #316ac5; color: #fff; }
.grid .cur td { background-color: #e1e6f0; }
.grid tr.cur th, .grid tr.tall .curno { background: #ffd28c; color: #500050; }
.grid .ck { padding-left: 9px; }
.ck input { appearance: none; width: 13px; height: 13px; border: 1px solid #1c5180; background: linear-gradient(135deg, #dcdcd7, #fff); display: block; }

.rebar { left: 306px; top: 195px; width: 680px; min-height: 400px; border-radius: 7px 7px 0 0; }
.rebar header { height: 30px; display: flex; align-items: center; gap: 4px; margin: 0 -4px; padding: 2px 6px 0; background: linear-gradient(#6478d8, #9db4ee 12%, #7b96e0 30%, #7d99e3 60%, #86aaec 85%, #7a94e0); border-radius: 7px 7px 0 0; }
.rebar h2 { flex: 1; }
.wb { width: 20px; height: 20px; border: 1px solid #c0cef4; border-radius: 3px; background: linear-gradient(135deg, #6f92ee, #3c64dc); }
.wb svg { width: 18px; height: 18px; }
.wb:disabled { background: #5f78e0; border-color: #8fa4ec; }
.rebar .close { background: linear-gradient(135deg, #c08090, #a85868); }
.rebar p { height: 27px; line-height: 30px; padding-left: 8px; }
.rebar .grid { width: 657px; }
.rebar .grid .head th { height: 19px; }
.rebar .grid tr.tall td { height: 39px; }
.phi { width: 10px; height: 12px; display: inline-block; vertical-align: -2px; margin: 0 1px 0 3px; }
.picno { display: flex; justify-content: space-between; height: 38px; padding-right: 1px; }
.dots { width: 15px; height: 36px; align-self: center; border: 1px solid #003c74; border-radius: 3px; background: linear-gradient(90deg, #fff, #ece9d8); font-weight: bold; }
.shape { width: 205px; height: 38px; }
.grid td:has(.shape) { padding: 0; }
.rebar footer { height: 34px; display: flex; gap: 23px; padding: 3px 17px 8px; }
.rebar footer button { width: 73px; border: 1px solid #c9c7ba; border-radius: 3px; background: #f5f4ea; color: #a1a192; }

.dialog { position: absolute; left: 467px; top: 391px; bottom: 0; width: 578px; border: 4px solid #0a4be0; border-width: 0 4px; border-radius: 7px 7px 0 0; background: #ece9d8; display: flex; flex-direction: column; overflow: hidden; }
.dialog header { height: 29px; flex: none; margin: 0 -4px; padding: 2px 5px 0 6px; display: flex; align-items: center; background: linear-gradient(#0a49c0, #2f88ff 8%, #0158e6 24%, #0256e4 60%, #066bff 90%, #0050d8); }
.dialog h2 { flex: 1; color: #fff; font-size: 14px; line-height: 20px; text-shadow: 1px 1px #0a2a80; }
.dialog .wb { border-color: #fff; background: linear-gradient(135deg, #f09878, #d03c10); }
.tabs { height: 20px; flex: none; display: flex; border-bottom: 1px solid #919b9c; }
.tab { width: 63px; height: 20px; background: #fcfcfe; border-top: 2px solid #ffa828; border-right: 1px solid #919b9c; border-radius: 2px 2px 0 0; line-height: 16px; }
.page { flex: 1; min-height: 0; background: linear-gradient(#fcfcfe, #f4f3ee); border-right: 2px solid #919b9c; padding: 10px 11px 0; overflow: hidden; }
fieldset { margin: 0; min-width: 0; border: 1px solid #d0d0bf; border-radius: 4px; padding: 0; }
legend { color: #0046d5; margin-left: 7px; padding: 0; line-height: 18px; }
.feat { height: 63px; }
.fields { display: flex; align-items: center; padding: 8px 17px 0 13px; }
.fields > label { width: 52px; }
.xpsel { display: flex; align-items: center; height: 20px; border: 1px solid #7f9db9; background: #fff; }
.xpsel select { appearance: none; flex: 1; min-width: 0; height: 18px; border: 0; background: none; padding-left: 3px; }
.xpsel svg { margin-right: 1px; background: #c1d2fb; border-radius: 2px; }
.bend { width: 97px; margin-right: 59px; }
.hook { flex: 1; }
.shapes { height: 330px; overflow: hidden; }
.gallery { display: flex; background: #ece9d8; border: 1px solid #aca899; border-bottom: 0; margin: -2px 8px 0 7px; }
.cells { display: grid; grid-template-columns: repeat(3, 167px); grid-auto-rows: 95px; background: #fff; height: 293px; overflow: hidden; }
.cells button { border-right: 1px solid #aca899; border-bottom: 1px solid #aca899; }
.cells .sel { outline: 3px solid #f00; outline-offset: -4px; }
.cells svg { width: 166px; height: 94px; }
.cells text, .shape text { font: 12px "Liberation Serif", serif; }
svg .red { fill: #f00; }
.cells text.note { font: 10px "Noto Sans CJK SC", sans-serif; }
.bar-l { stroke: #000; stroke-width: 2; fill: none; }
.vscroll { margin-left: auto; width: 17px; background: #f6f5f2; display: flex; flex-direction: column; padding-left: 1px; }
.vscroll button { height: 17px; width: 16px; }
.vscroll button svg { width: 14px; height: 14px; }
.vscroll .up { margin-bottom: 1px; }
.vscroll i { height: 75px; width: 16px; margin-bottom: auto; background: linear-gradient(#98b0f0, #98b0f0) 4px 33px / 6px 1px no-repeat, linear-gradient(#98b0f0, #98b0f0) 4px 36px / 6px 1px no-repeat, linear-gradient(#98b0f0, #98b0f0) 4px 39px / 6px 1px no-repeat, linear-gradient(90deg, #d3e0fd, #b6cafb); }

.marks { position: absolute; left: 0; top: 0; width: 1085px; height: 823px; pointer-events: none; }
```
